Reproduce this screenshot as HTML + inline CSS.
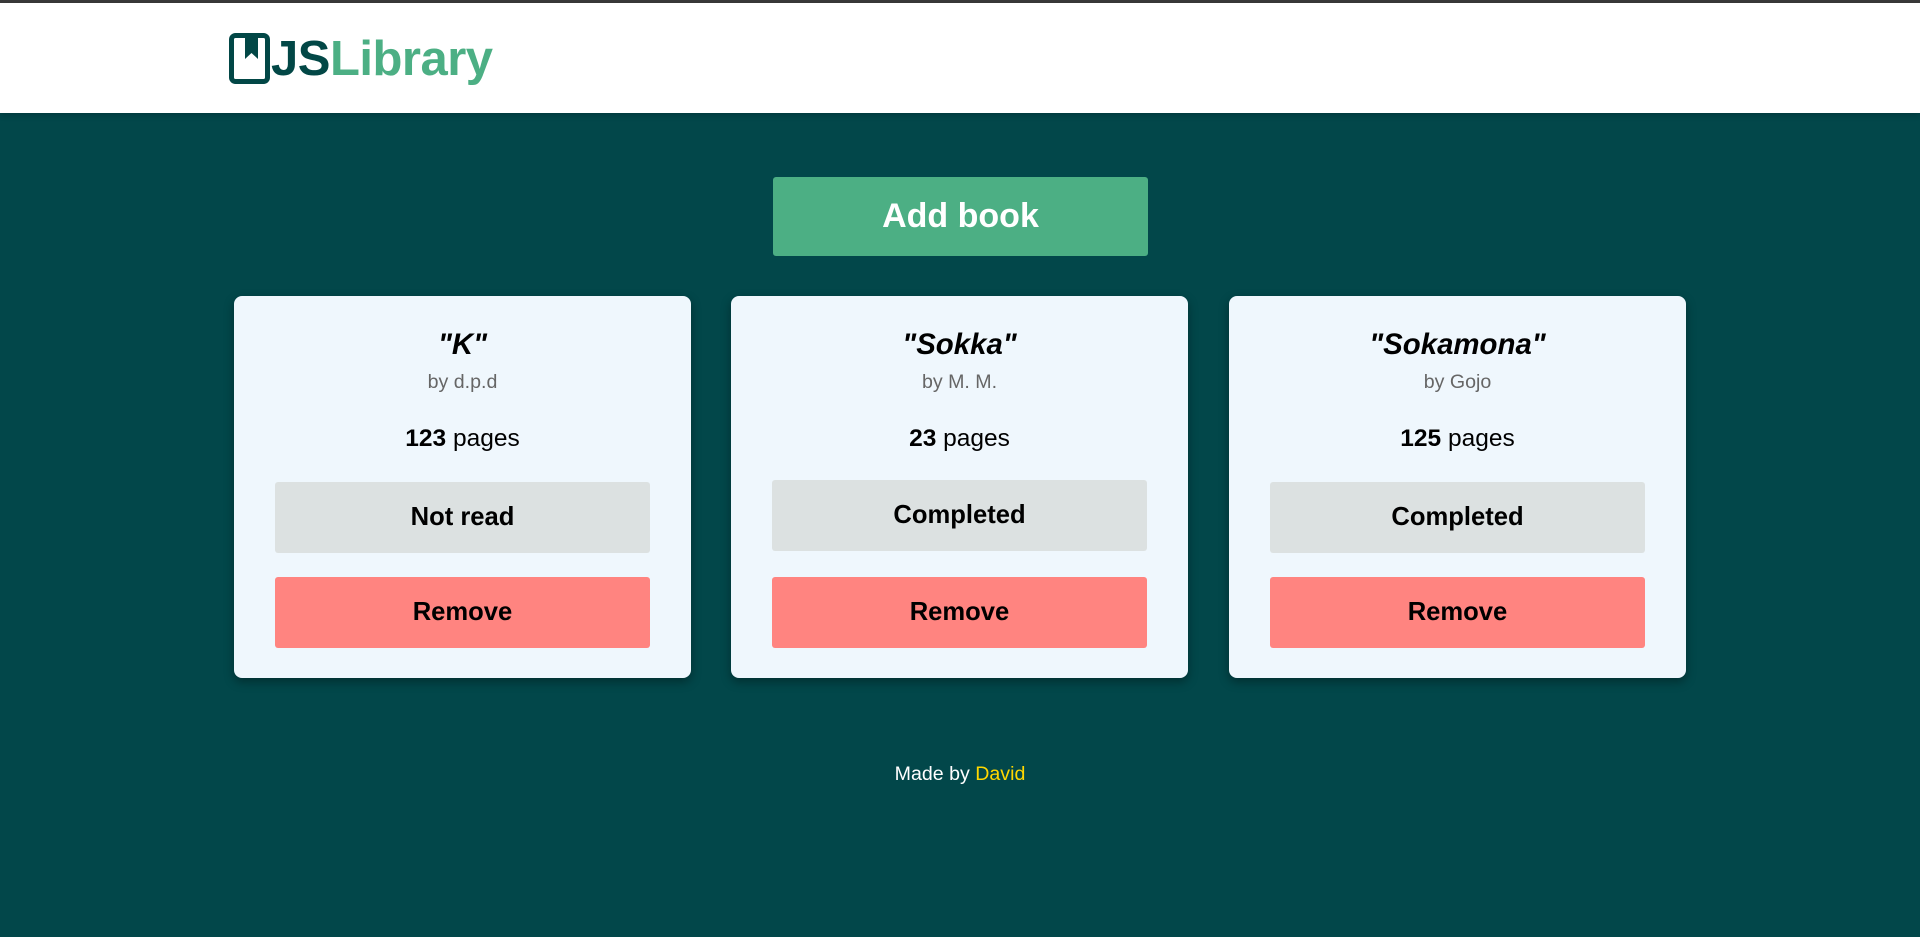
<!DOCTYPE html>
<html><head><meta charset="utf-8"><style>
*{margin:0;padding:0;box-sizing:border-box}
body{width:1920px;height:937px;background:#02474a;font-family:"Liberation Sans",Arial,sans-serif;position:relative;overflow:hidden}
.top{position:absolute;left:0;top:0;width:1920px;height:3px;background:#3a3a3a}
header{position:absolute;left:0;top:3px;width:1920px;height:110px;background:#fff;box-shadow:0 2px 6px rgba(0,0,0,.2)}
.logo{position:absolute;left:229px;top:33px}
.ltext{position:absolute;left:271px;top:29px;font-size:49px;font-weight:bold;letter-spacing:-0.5px;line-height:60px}
.js{color:#024746}.lib{color:#4caf84}
.add{position:absolute;left:773px;top:177px;width:375px;height:79px;background:#4caf84;border-radius:3px;color:#fff;font-weight:bold;font-size:34px;text-align:center;line-height:79px}
.card{position:absolute;top:296px;width:457px;height:382px;background:#eff7fd;border-radius:8px;box-shadow:0 4px 10px rgba(0,0,0,.35);text-align:center}
.t{position:absolute;left:0;right:0;top:31px;font-size:29.4px;font-weight:bold;font-style:italic;line-height:36px}
.by{position:absolute;left:0;right:0;top:74px;font-size:19.6px;color:#666;line-height:24px}
.pg{position:absolute;left:0;right:0;top:128px;font-size:24.5px;line-height:30px}
.btn{position:absolute;left:41px;width:375px;height:71px;border-radius:3px;font-size:25.6px;font-weight:bold;line-height:71px}
.st{top:186px;background:#dce1e1}
.rm{top:281px;background:#ff8480}
.foot{position:absolute;left:0;width:1920px;top:762px;text-align:center;color:#fff;font-size:19.6px;line-height:24px}
.foot span{color:#ffd700}
</style></head><body>
<div class="top"></div>
<header></header>
<svg class="logo" width="41" height="51" viewBox="0 0 41 51"><rect x="2.5" y="2.5" width="36" height="46" rx="4" fill="none" stroke="#024746" stroke-width="5"/><path d="M16 3 H29 V26 L22.5 20 L16 26 Z" fill="#024746"/></svg>
<div class="ltext"><span class="js">JS</span><span class="lib">Library</span></div>
<div class="add">Add book</div>
<div class="card" style="left:234px"><div class="t">"K"</div><div class="by">by d.p.d</div><div class="pg"><b>123</b> pages</div><div class="btn st">Not read</div><div class="btn rm">Remove</div></div>
<div class="card" style="left:731px"><div class="t">"Sokka"</div><div class="by">by M. M.</div><div class="pg"><b>23</b> pages</div><div class="btn st" style="top:184px">Completed</div><div class="btn rm">Remove</div></div>
<div class="card" style="left:1229px"><div class="t">"Sokamona"</div><div class="by">by Gojo</div><div class="pg"><b>125</b> pages</div><div class="btn st">Completed</div><div class="btn rm">Remove</div></div>
<div class="foot">Made by <span>David</span></div>
</body></html>
